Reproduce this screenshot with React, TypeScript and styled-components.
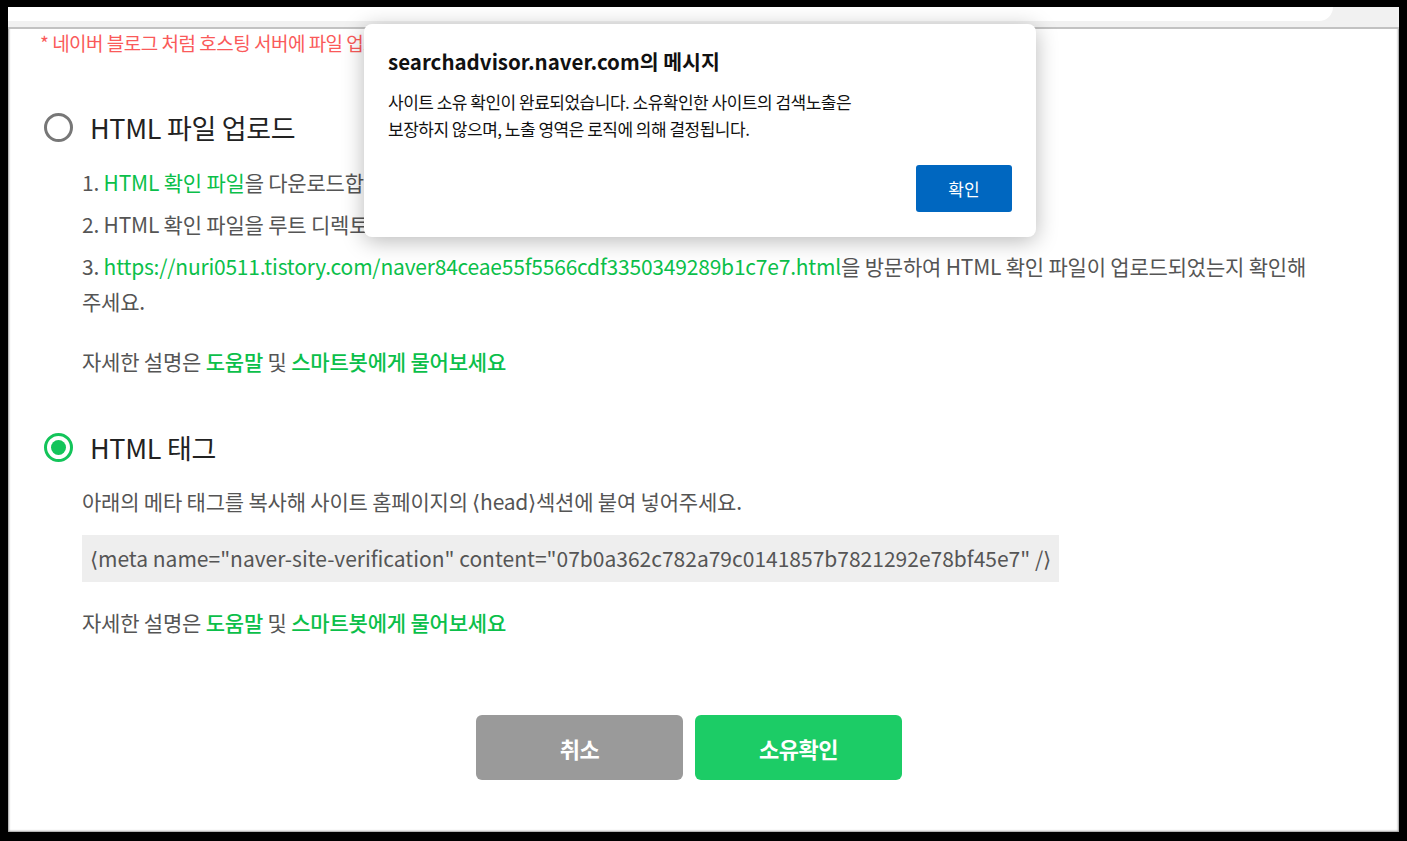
import styled, { createGlobalStyle } from "styled-components";

const GlobalStyle = createGlobalStyle`
  html, body {
    margin: 0;
    padding: 0;
    background: #000;
  }
  body {
    font-family: "Noto Sans CJK KR", "Noto Sans", sans-serif;
    word-break: keep-all;
  }
`;

const Frame = styled.div`
  width: 1407px;
  height: 841px;
  box-sizing: border-box;
  padding: 7px 8px 9px 8px;
  background: #000;
`;

const Sheet = styled.div`
  position: relative;
  height: 100%;
  background: #fff;
  overflow: hidden;
  box-shadow: inset 0 0 2px 1px #9a9a9a;
`;

const TopStrip = styled.div`
  height: 20px;
  background: #f1f1f1;
  border-bottom: 2px solid #c2c2c2;
`;

const UrlBox = styled.div`
  width: 1325px;
  height: 14px;
  background: #fff;
  border-bottom-right-radius: 18px;
`;

const Content = styled.div`
  width: 1330px;
  box-sizing: border-box;
  padding: 0 0 0 32px;
`;

const Notice = styled.p`
  margin: 1px 0 0;
  font-size: 19px;
  line-height: 26px;
  letter-spacing: -0.5px;
  color: #fa5a5a;
`;

const Section = styled.section<{ top: number }>`
  margin-top: ${({ top }) => top}px;
`;

const Header = styled.div`
  display: flex;
  align-items: center;
  gap: 17px;
  height: 36px;
  padding-left: 4px;
`;

const Radio = styled.span<{ checked?: boolean }>`
  width: 29px;
  height: 29px;
  box-sizing: border-box;
  border-radius: 50%;
  border: 3px solid ${({ checked }) => (checked ? "#13c45a" : "#777")};
  display: flex;
  align-items: center;
  justify-content: center;
  &::after {
    content: "";
    width: 15px;
    height: 15px;
    border-radius: 50%;
    background: #13c45a;
    display: ${({ checked }) => (checked ? "block" : "none")};
  }
`;

const Title = styled.h2`
  margin: 0;
  font-size: 27px;
  font-weight: 400;
  letter-spacing: -0.3px;
  color: #222;
`;

const Body = styled.div<{ top: number }>`
  margin-top: ${({ top }) => top}px;
  padding-left: 42px;
  font-size: 21px;
  line-height: 35px;
  letter-spacing: -0.2px;
  color: #555;
`;

const Item = styled.p`
  margin: 0 0 7px;
  width: 1262px;
`;

const Link = styled.span`
  color: #0bbf4a;
`;

const Help = styled.p<{ top: number }>`
  margin: ${({ top }) => top}px 0 0;
`;

const HelpLink = styled.span`
  color: #0bbf4a;
  font-weight: 500;
`;

const Code = styled.div`
  display: inline-block;
  margin-top: 9px;
  padding: 6px 8px;
  background: #eeeeee;
  font-size: 21px;
  line-height: 35px;
  letter-spacing: 0;
`;

const Actions = styled.div`
  display: flex;
  justify-content: center;
  gap: 12px;
  margin-top: 75px;
`;

const ActionButton = styled.button<{ primary?: boolean }>`
  width: 207px;
  height: 65px;
  border: none;
  border-radius: 6px;
  background: ${({ primary }) => (primary ? "#1ccc66" : "#9a9a9a")};
  color: #fff;
  font-family: inherit;
  font-size: 22px;
  font-weight: 700;
  letter-spacing: -0.5px;
  cursor: pointer;
`;

const Dialog = styled.div`
  position: absolute;
  left: 356px;
  top: 17px;
  width: 672px;
  box-sizing: border-box;
  padding: 23px 24px 25px;
  background: #fff;
  border-radius: 8px;
  box-shadow: 0 4px 22px rgba(0, 0, 0, 0.28);
  font-family: "Noto Sans CJK KR", "Noto Sans", sans-serif;
`;

const DialogTitle = styled.h3`
  margin: 0;
  font-size: 20.5px;
  line-height: 28px;
  font-weight: 700;
  letter-spacing: 0;
  color: #111;
`;

const DialogText = styled.p`
  margin: 13px 0 0;
  font-size: 17px;
  line-height: 27px;
  letter-spacing: -0.5px;
  color: #111;
  width: 480px;
`;

const DialogFooter = styled.div`
  display: flex;
  justify-content: flex-end;
  margin-top: 23px;
`;

const OkButton = styled.button`
  width: 96px;
  height: 47px;
  border: none;
  border-radius: 3px;
  background: #0067c0;
  color: #fff;
  font-family: inherit;
  font-size: 17px;
`;

export default function App() {
  return (
    <>
      <GlobalStyle />
      <Frame>
        <Sheet>
          <TopStrip>
            <UrlBox />
          </TopStrip>
          <Content>
            <Notice>
              * 네이버 블로그 처럼 호스팅 서버에 파일 업로드가 불가능한 경우 HTML 태그 방식으로 소유확인을 진행해 주시기 바랍니다.
            </Notice>

            <Section top={53}>
              <Header>
                <Radio />
                <Title>HTML 파일 업로드</Title>
              </Header>
              <Body top={20}>
                <Item>
                  1. <Link>HTML 확인 파일</Link>을 다운로드합니다.
                </Item>
                <Item>2. HTML 확인 파일을 루트 디렉토리에 업로드합니다.</Item>
                <Item>
                  3. <Link>https://nuri0511.tistory.com/naver84ceae55f5566cdf3350349289b1c7e7.html</Link>을 방문하여
                  HTML 확인 파일이 업로드되었는지 확인해 주세요.
                </Item>
                <Help top={25}>
                  자세한 설명은 <HelpLink>도움말</HelpLink> 및 <HelpLink>스마트봇에게 물어보세요</HelpLink>
                </Help>
              </Body>
            </Section>

            <Section top={50}>
              <Header>
                <Radio checked />
                <Title>HTML 태그</Title>
              </Header>
              <Body top={19}>
                <Item>아래의 메타 태그를 복사해 사이트 홈페이지의 ⟨head⟩섹션에 붙여 넣어주세요.</Item>
                <Code>
                  ⟨meta name="naver-site-verification" content="07b0a362c782a79c0141857b7821292e78bf45e7" /⟩
                </Code>
                <Help top={23}>
                  자세한 설명은 <HelpLink>도움말</HelpLink> 및 <HelpLink>스마트봇에게 물어보세요</HelpLink>
                </Help>
              </Body>
            </Section>

            <Actions>
              <ActionButton>취소</ActionButton>
              <ActionButton primary>소유확인</ActionButton>
            </Actions>
          </Content>

          <Dialog>
            <DialogTitle>searchadvisor.naver.com의 메시지</DialogTitle>
            <DialogText>
              사이트 소유 확인이 완료되었습니다. 소유확인한 사이트의 검색노출은 보장하지 않으며, 노출 영역은 로직에 의해 결정됩니다.
            </DialogText>
            <DialogFooter>
              <OkButton>확인</OkButton>
            </DialogFooter>
          </Dialog>
        </Sheet>
      </Frame>
    </>
  );
}
